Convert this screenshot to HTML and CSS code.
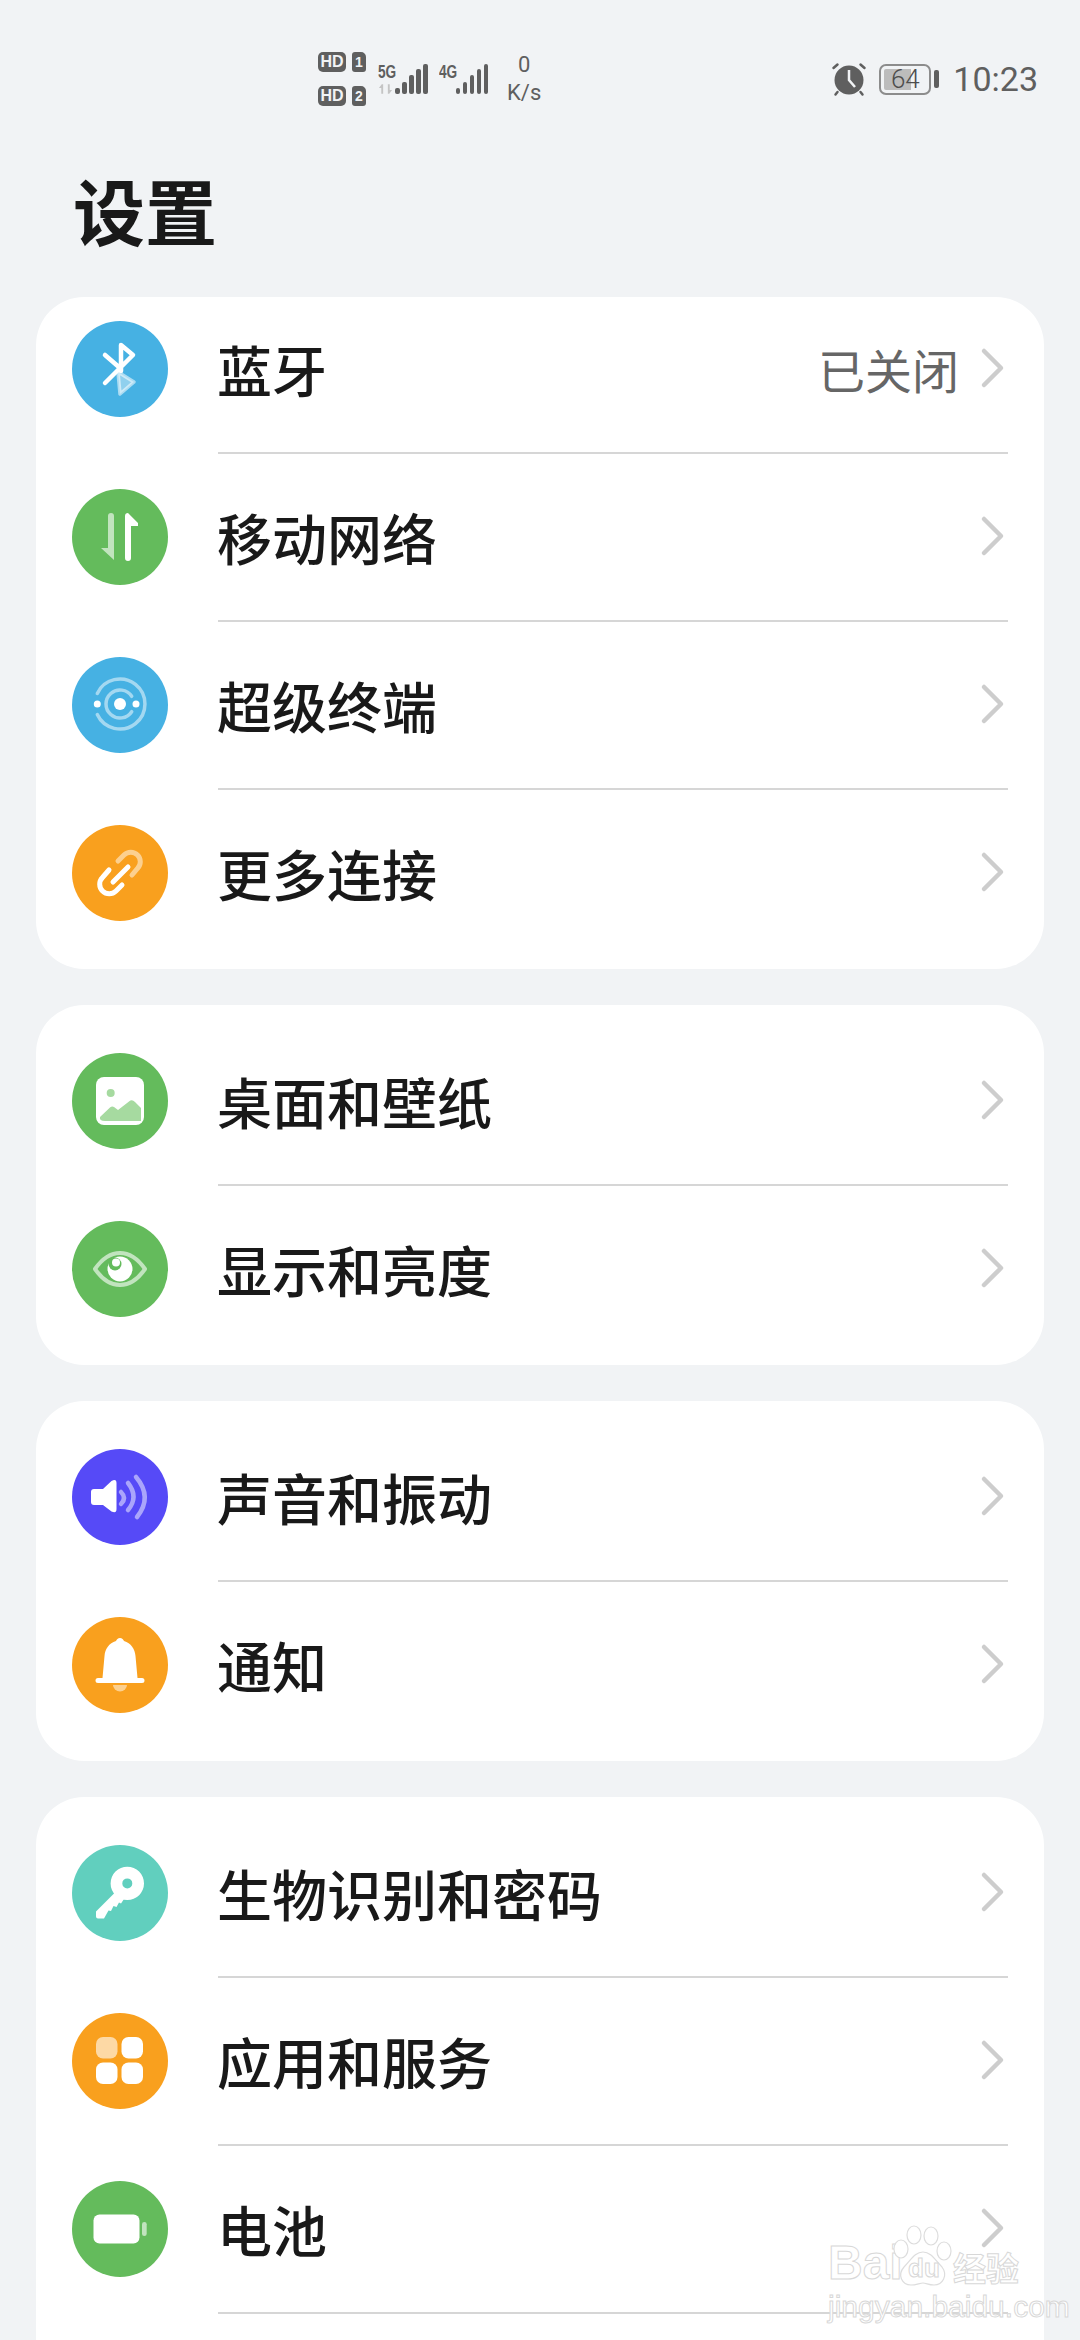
FILE: index.html
```html
<!DOCTYPE html>
<html lang="zh-CN">
<head>
    <meta charset="UTF-8">
    <meta name="viewport" content="width=device-width, initial-scale=1.0">
    <title>设置</title>
    <link rel="stylesheet" href="styles.css">
</head>
<body>
    <div class="statusbar">
        <div class="sims">
            <div class="sim"><span class="hd">HD</span><span class="slot">1</span></div>
            <div class="sim"><span class="hd">HD</span><span class="slot">2</span></div>
        </div>
        <div class="net net-first">
            <span class="net-type">5G</span>
            <svg class="net-arrows" viewBox="0 0 16 10"><path d="M1 4 4 0h1.500v10H3.500V4zM15 6l-3 4h-1.500V0h2v6z"/></svg>
        </div>
        <div class="bars">
            <i style="height:6px"></i><i style="height:12px"></i><i style="height:19px"></i><i style="height:25px"></i><i style="height:30px"></i>
        </div>
        <div class="net net-second">
            <span class="net-type">4G</span>
        </div>
        <div class="bars">
            <i style="height:6px"></i><i style="height:12px"></i><i style="height:19px"></i><i style="height:25px"></i><i style="height:30px"></i>
        </div>
        <div class="speed"><span>0</span><span>K/s</span></div>
        <div class="status-right">
            <svg class="alarm" viewBox="0 0 36 36">
                <circle cx="18" cy="19" r="14.500" fill="#5f5f5f"/>
                <path d="M18 9v10l6 7" fill="none" stroke="#f1f3f5" stroke-width="2.500"/>
                <path d="M2.500 7 6.500 3.500M33.500 7 29.500 3.500M6.500 31 4.500 33.500M29.500 31 31.500 33.500" fill="none" stroke="#5f5f5f" stroke-width="2.500" stroke-linecap="round"/>
            </svg>
            <div class="battery">
                <div class="battery-level" style="width:64%"></div>
                <span class="battery-num">64</span>
            </div>
            <div class="battery-tip"></div>
            <span class="clock">10:23</span>
        </div>
    </div>

    <h1 class="title">设置</h1>

    <div class="card card-scrolled">
        <div class="row">
            <div class="icon blue">
                <svg viewBox="0 0 96 96">
                    <path d="M46 51 62 61 48 73z" fill="#fff" fill-opacity=".4" stroke="#fff" stroke-opacity=".55" stroke-width="3.500" stroke-linejoin="round"/>
                    <path d="M33 34 48 47M49 50V24L61 34 33 62" fill="none" stroke="#fff" stroke-width="4.500" stroke-linecap="round" stroke-linejoin="round"/>
                </svg>
            </div>
            <div class="row-body">
                <span class="label">蓝牙</span>
                <span class="value">已关闭</span>
                <svg class="chevron" viewBox="0 0 26 42"><path d="M4 4 21 21 4 38"/></svg>
            </div>
        </div>
        <div class="row">
            <div class="icon green">
                <svg viewBox="0 0 96 96">
                    <path d="M36 59V27a3 3 0 0 1 6 0V71L29 59z" fill="#fff" fill-opacity=".6"/>
                    <path d="M53 27a3 3 0 0 1 3-3L66 34v3H59V69a3 3 0 0 1-6 0z" fill="#fff"/>
                </svg>
            </div>
            <div class="row-body">
                <span class="label">移动网络</span>
                <svg class="chevron" viewBox="0 0 26 42"><path d="M4 4 21 21 4 38"/></svg>
            </div>
        </div>
        <div class="row">
            <div class="icon blue">
                <svg viewBox="0 0 96 96">
                    <g fill="none" stroke="#fff" stroke-opacity=".5" stroke-width="3.500" stroke-linecap="round">
                        <path d="M25.300 36.400A25 25 0 1 1 25.300 57.600"/>
                        <path d="M59.700 39.300A14 14 0 1 0 59.700 54.700"/>
                    </g>
                    <circle cx="25.300" cy="47" r="3.500" fill="#fff"/>
                    <circle cx="64" cy="47" r="3.500" fill="#fff"/>
                    <circle cx="48" cy="47" r="6" fill="#fff"/>
                </svg>
            </div>
            <div class="row-body">
                <span class="label">超级终端</span>
                <svg class="chevron" viewBox="0 0 26 42"><path d="M4 4 21 21 4 38"/></svg>
            </div>
        </div>
        <div class="row">
            <div class="icon orange">
                <svg viewBox="0 0 96 96">
                    <g fill="none" stroke-width="5" stroke-linecap="round">
                        <path d="M46 36 52 30A9.500 9.500 0 0 1 65.500 43.500L60 50" stroke="#fff" stroke-opacity=".5"/>
                        <path d="M41 57 56 42M50 60 44 66A9.500 9.500 0 0 1 30.500 52.500L37 45" stroke="#fff"/>
                    </g>
                </svg>
            </div>
            <div class="row-body">
                <span class="label">更多连接</span>
                <svg class="chevron" viewBox="0 0 26 42"><path d="M4 4 21 21 4 38"/></svg>
            </div>
        </div>
    </div>

    <div class="card">
        <div class="row">
            <div class="icon green">
                <svg viewBox="0 0 96 96">
                    <rect x="24" y="24" width="48" height="48" rx="8" fill="#fff"/>
                    <circle cx="38.700" cy="40" r="4" fill="#a6daa0"/>
                    <path d="M28 64 38 54.500Q40 53 42 54L46 57 57 48.500Q60 46 63 49L69 55V68H33Q27 68 28 64z" fill="#a6daa0"/>
                </svg>
            </div>
            <div class="row-body">
                <span class="label">桌面和壁纸</span>
                <svg class="chevron" viewBox="0 0 26 42"><path d="M4 4 21 21 4 38"/></svg>
            </div>
        </div>
        <div class="row">
            <div class="icon green">
                <svg viewBox="0 0 96 96">
                    <path d="M23 48C30 38 39 32 48 32S66 38 73 48C66 58 57 64 48 64S30 58 23 48z" fill="none" stroke="#fff" stroke-opacity=".6" stroke-width="4" stroke-linejoin="round"/>
                    <circle cx="48" cy="48" r="12.500" fill="#fff"/>
                    <circle cx="43" cy="43" r="6.500" fill="#64bb5c"/>
                    <circle cx="44" cy="41.500" r="4" fill="#fff"/>
                </svg>
            </div>
            <div class="row-body">
                <span class="label">显示和亮度</span>
                <svg class="chevron" viewBox="0 0 26 42"><path d="M4 4 21 21 4 38"/></svg>
            </div>
        </div>
    </div>

    <div class="card">
        <div class="row">
            <div class="icon purple">
                <svg viewBox="0 0 96 96">
                    <path d="M22 40H31L39.500 32Q44.500 29.500 44.500 34V60Q44.500 65 39.500 62.500L31 56H22Q19 56 19 53V43Q19 40 22 40z" fill="#fff"/>
                    <path d="M49 43Q55 49 49 55M56 34Q67 48 56 61M64 28Q81 48 65 68" fill="none" stroke="#aaa5fb" stroke-width="4.500" stroke-linecap="round"/>
                </svg>
            </div>
            <div class="row-body">
                <span class="label">声音和振动</span>
                <svg class="chevron" viewBox="0 0 26 42"><path d="M4 4 21 21 4 38"/></svg>
            </div>
        </div>
        <div class="row">
            <div class="icon orange">
                <svg viewBox="0 0 96 96">
                    <path d="M48 21C50 21 51.500 22.500 52 24C59 26 63 32 63.500 39L65.500 61H70A2.500 2.500 0 0 1 70 66H26A2.500 2.500 0 0 1 26 61H30.500L32.500 39C33 32 37 26 44 24C44.500 22.500 46 21 48 21z" fill="#fff"/>
                    <path d="M41 68H55A7 6.500 0 0 1 41 68z" fill="#fff" fill-opacity=".5"/>
                </svg>
            </div>
            <div class="row-body">
                <span class="label">通知</span>
                <svg class="chevron" viewBox="0 0 26 42"><path d="M4 4 21 21 4 38"/></svg>
            </div>
        </div>
    </div>

    <div class="card card-cut">
        <div class="row">
            <div class="icon teal">
                <svg viewBox="0 0 96 96">
                    <path d="M24 66.500 44 46.500 52 54 49 58.500 47 57.500 44.500 62 41.500 61 39 66 36.500 65.500 32 73.500H26A2 2 0 0 1 24 71.500z" fill="#fff"/>
                    <path fill-rule="evenodd" d="M55.300 21.700A16.700 16.700 0 1 1 55.300 55.100 16.700 16.700 0 1 1 55.300 21.700zM55.300 33.400A5 5 0 1 0 55.300 43.400 5 5 0 1 0 55.300 33.400z" fill="#fff"/>
                </svg>
            </div>
            <div class="row-body">
                <span class="label">生物识别和密码</span>
                <svg class="chevron" viewBox="0 0 26 42"><path d="M4 4 21 21 4 38"/></svg>
            </div>
        </div>
        <div class="row">
            <div class="icon orange">
                <svg viewBox="0 0 96 96">
                    <rect x="24" y="24" width="21.500" height="21.500" rx="7" fill="#fff" fill-opacity=".6"/>
                    <rect x="49.500" y="24" width="21.500" height="21.500" rx="7" fill="#fff"/>
                    <rect x="24" y="49.500" width="21.500" height="21.500" rx="7" fill="#fff"/>
                    <rect x="49.500" y="49.500" width="21.500" height="21.500" rx="7" fill="#fff"/>
                </svg>
            </div>
            <div class="row-body">
                <span class="label">应用和服务</span>
                <svg class="chevron" viewBox="0 0 26 42"><path d="M4 4 21 21 4 38"/></svg>
            </div>
        </div>
        <div class="row">
            <div class="icon green">
                <svg viewBox="0 0 96 96">
                    <rect x="21.500" y="33.500" width="46" height="29" rx="6" fill="#fff"/>
                    <rect x="70" y="41" width="4.700" height="14" rx="2.300" fill="#fff" fill-opacity=".6"/>
                </svg>
            </div>
            <div class="row-body">
                <span class="label">电池</span>
                <svg class="chevron" viewBox="0 0 26 42"><path d="M4 4 21 21 4 38"/></svg>
            </div>
        </div>
    </div>

    <div class="watermark">
        <div class="wm-top">
            <span class="wm-bai">Bai</span>
            <div class="wm-paw">
                <svg viewBox="0 0 60 62">
                    <g fill="#fff" stroke="#ddd" stroke-width="1.200">
                        <ellipse cx="8" cy="24" rx="7" ry="9"/>
                        <ellipse cx="21" cy="10" rx="7" ry="9"/>
                        <ellipse cx="38" cy="11" rx="7" ry="9"/>
                        <ellipse cx="51" cy="26" rx="7" ry="9"/>
                        <path d="M30 27C38 27 42 35 49 42 55 50 50 60 41 60 36 60 33 58 30 58S23 60 18 60C9 60 4 50 11 42 18 35 22 27 30 27z"/>
                    </g>
                </svg>
                <span class="wm-du">du</span>
            </div>
            <span class="wm-cn">经验</span>
        </div>
        <div class="wm-url">jingyan.baidu.com</div>
    </div>
</body>
</html>
```

FILE: styles.css
```css
html {
    height: 2340px;
    overflow: hidden;
}
body {
    margin: 0;
    width: 1080px;
    height: 2340px;
    overflow: hidden;
    position: relative;
    background-color: #f1f3f5;
    font-family: "Noto Sans CJK SC", "Noto Sans", sans-serif;
    color: #191919;
}

/* status bar */
.statusbar {
    display: flex;
    align-items: center;
    height: 158px;
    padding: 0 42px 0 318px;
    box-sizing: border-box;
    color: #5f5f5f;
}
.sims {
    display: flex;
    flex-direction: column;
    gap: 14px;
}
.sim {
    display: flex;
    gap: 6px;
}
.hd, .slot {
    display: flex;
    align-items: center;
    justify-content: center;
    height: 20px;
    background: #5f5f5f;
    color: #f1f3f5;
    font-family: "Liberation Sans", sans-serif;
    font-weight: bold;
    font-size: 16px;
}
.hd {
    width: 28px;
    border-radius: 5px;
}
.slot {
    width: 14px;
    border-radius: 3px 5px 3px 3px;
    font-size: 14px;
}
.net {
    display: flex;
    flex-direction: column;
    height: 30px;
    width: 17px;
    justify-content: space-between;
}
.net-first {
    margin-left: 12px;
}
.net-second {
    margin-left: 11px;
}
.net-type {
    display: block;
    font-family: "Liberation Sans", sans-serif;
    font-weight: bold;
    font-size: 19px;
    line-height: 15px;
    white-space: nowrap;
    transform: scaleX(.72);
    transform-origin: left;
}
.net-arrows {
    width: 15px;
    height: 10px;
    fill: #c4c4c4;
}
.bars {
    display: flex;
    align-items: flex-end;
    gap: 2.5px;
    height: 30px;
}
.bars i {
    display: block;
    width: 4.5px;
    border-radius: 2px;
    background: #5f5f5f;
}
.speed {
    display: flex;
    flex-direction: column;
    align-items: center;
    margin-left: 19px;
    font-family: Roboto, sans-serif;
    font-size: 22px;
    line-height: 28px;
}
.status-right {
    display: flex;
    align-items: center;
    margin-left: auto;
}
.alarm {
    width: 36px;
    height: 36px;
    margin-right: 12px;
}
.battery {
    position: relative;
    width: 52px;
    height: 31px;
    border: 2px solid #8c8c8c;
    border-radius: 7px;
    box-sizing: border-box;
    padding: 3px;
}
.battery-level {
    height: 100%;
    background: #bcbcbc;
    border-radius: 2px 0 0 2px;
}
.battery-num {
    position: absolute;
    left: 0;
    right: 0;
    top: 0;
    bottom: 0;
    text-align: center;
    font-family: Roboto, sans-serif;
    font-weight: 300;
    font-size: 26px;
    line-height: 27px;
    color: #4d4d4d;
}
.battery-tip {
    width: 5px;
    height: 18px;
    margin-left: 3px;
    border-radius: 2px;
    background: #5f5f5f;
}
.clock {
    margin-left: 14px;
    font-family: Roboto, sans-serif;
    font-size: 34px;
    line-height: 40px;
}

/* page title */
.title {
    margin: 0 0 38px;
    padding-left: 73px;
    height: 101px;
    font-size: 72px;
    font-weight: 700;
    line-height: 101px;
}

/* cards */
.card {
    margin: 0 36px 36px;
    padding: 12px 0;
    background: #fff;
    border-radius: 48px;
    overflow: hidden;
}
.card-scrolled {
    padding-top: 0;
}
.card-scrolled .row:first-child {
    margin-top: -12px;
}
.card-cut {
    margin-bottom: 0;
    padding-bottom: 27px;
    border-radius: 48px 48px 0 0;
}
.row {
    display: flex;
    align-items: center;
    height: 168px;
    padding: 0 36px;
}
.icon {
    flex: none;
    width: 96px;
    height: 96px;
    margin-right: 50px;
    border-radius: 50%;
}
.icon svg {
    display: block;
    width: 96px;
    height: 96px;
}
.blue { background: #46b1e3; }
.green { background: #64bb5c; }
.orange { background: #f9a01e; }
.purple { background: #564af7; }
.teal { background: #61cfbe; }
.row-body {
    flex: 1;
    display: flex;
    align-items: center;
    height: 170px;
    box-sizing: border-box;
    border-bottom: 2px solid #d6d6d6;
}
.row:last-child .row-body {
    border-bottom-color: transparent;
}
.card-cut .row:last-child .row-body {
    border-bottom-color: #d6d6d6;
}
.label {
    flex: 1;
    margin-left: -1px;
    font-size: 55px;
    font-weight: 500;
}
.value {
    margin-right: 21px;
    font-size: 47px;
    color: #666;
}
.chevron {
    width: 26px;
    height: 42px;
    margin-right: 2px;
    fill: none;
    stroke: #cdcdcd;
    stroke-width: 4.500px;
    stroke-linecap: round;
    stroke-linejoin: round;
}

/* watermark */
.watermark {
    position: absolute;
    left: 828px;
    top: 2225px;
    width: 195px;
    color: #fff;
}
.wm-top {
    display: flex;
    align-items: flex-end;
    height: 62px;
}
.wm-bai, .wm-du, .wm-url, .wm-cn {
    -webkit-text-stroke: 1px #d8d8d8;
}
.wm-bai {
    width: 65px;
    font-family: "Liberation Sans", sans-serif;
    font-weight: bold;
    font-size: 48px;
    line-height: 48px;
}
.wm-paw {
    position: relative;
    width: 60px;
    height: 62px;
}
.wm-paw svg {
    display: block;
    width: 60px;
    height: 62px;
}
.wm-du {
    position: absolute;
    left: 15px;
    top: 28px;
    font-family: "Liberation Sans", sans-serif;
    font-weight: bold;
    font-size: 26px;
}
.wm-cn {
    font-size: 33px;
    font-weight: 700;
    line-height: 40px;
    white-space: nowrap;
}
.wm-url {
    margin-top: 3px;
    font-family: "Liberation Sans", sans-serif;
    font-size: 30px;
    line-height: 34px;
    white-space: nowrap;
}
```
